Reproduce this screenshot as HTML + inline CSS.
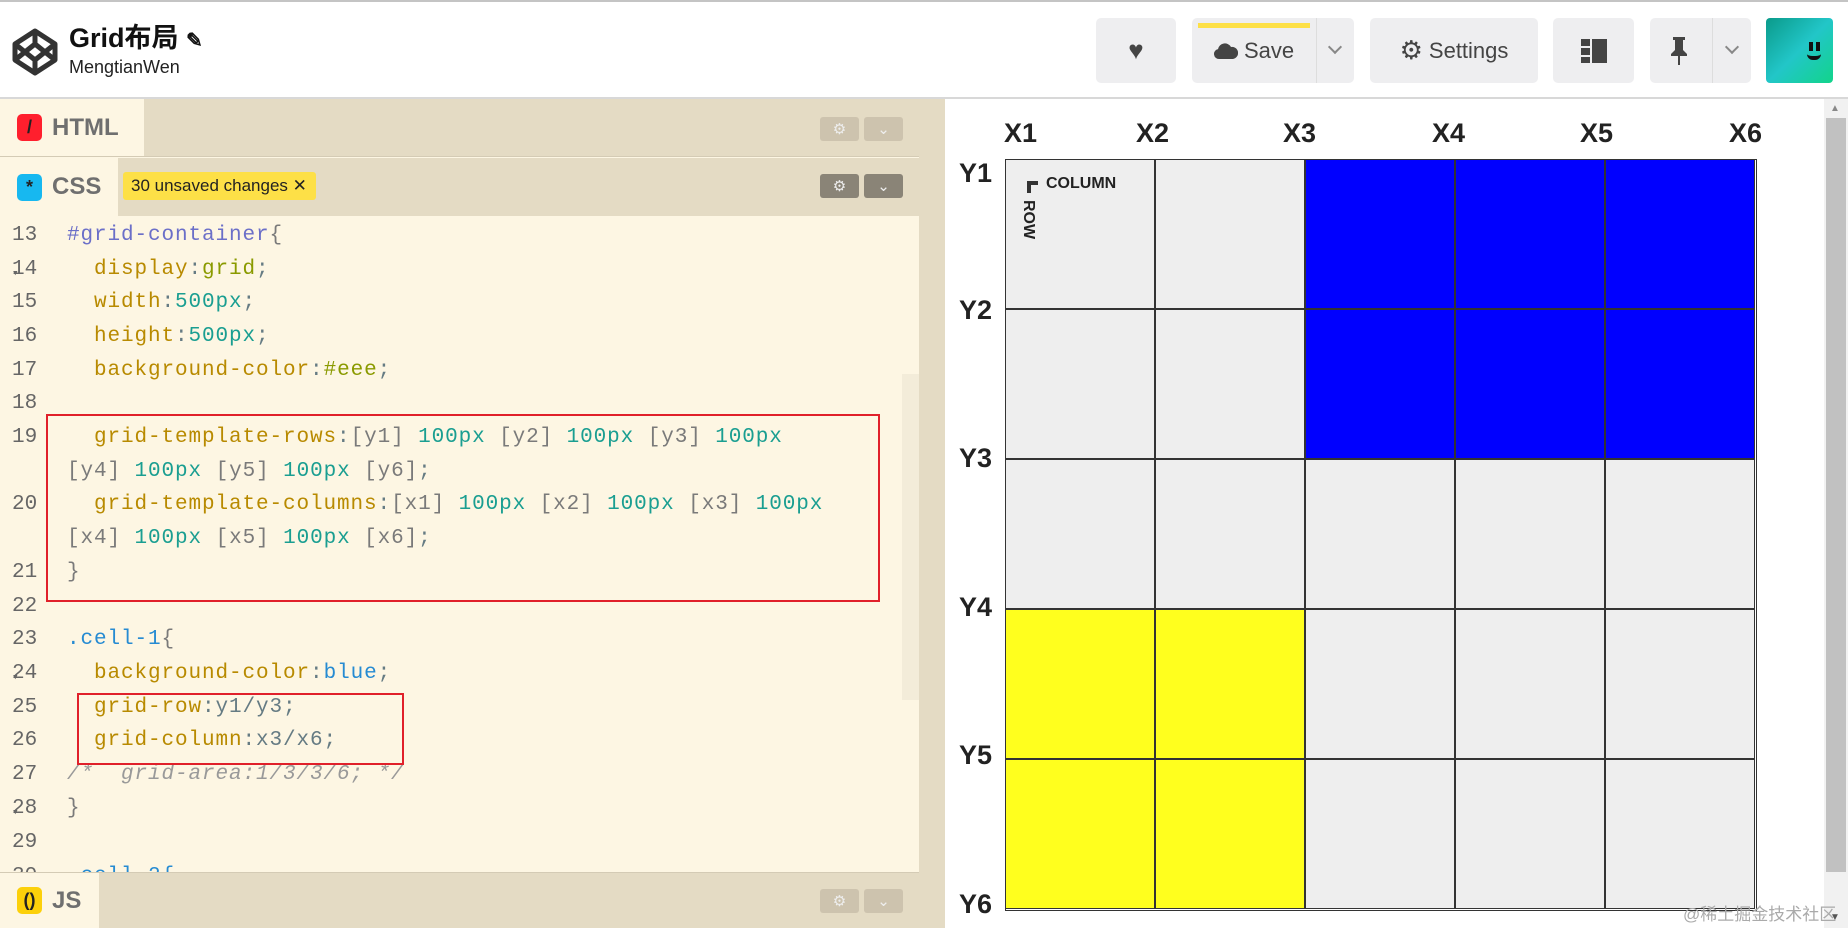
<!DOCTYPE html>
<html><head><meta charset="utf-8"><style>
*{margin:0;padding:0;box-sizing:border-box}
body{width:1848px;height:928px;overflow:hidden;background:#fff;font-family:"Liberation Sans","Noto Sans CJK SC",sans-serif;position:relative}
.a{position:absolute}
.hdr{left:0;top:0;width:1848px;height:99px;background:#fff;border-top:2px solid #c4c4c4;border-bottom:2px solid #d8d8d8}
.btn{position:absolute;top:16px;height:65px;background:#eeeef0;border-radius:5px;color:#444;font-size:22px;display:flex;align-items:center;justify-content:center}
.ed{left:0;top:99px;width:919px;height:829px;background:#fdf6e3}
.bar{position:absolute;left:0;width:919px;background:#e4dbc4}
.tab{position:absolute;left:0;top:0;bottom:0;background:#fdf6e3;display:flex;align-items:center;font-size:24px;color:#6f6f6f;font-weight:bold}
.ic{width:25px;height:27px;border-radius:5px;margin:0 10px 0 17px;display:flex;align-items:center;justify-content:center;font-size:18px;color:#222}
.sb{position:absolute;width:39px;height:24px;background:#cdc3ae;border-radius:3px;color:#eee;font-size:15px;display:flex;align-items:center;justify-content:center}
.ln{position:absolute;left:12px;width:36px;font-family:"Liberation Mono",monospace;font-size:21px;color:#666;height:34px;line-height:34px}
.cd{position:absolute;font-family:"Liberation Mono",monospace;font-size:21px;letter-spacing:0.9px;height:34px;line-height:34px;white-space:pre;color:#657b83}
.p{color:#b88a00}.n{color:#1a9e91}.g{color:#7a7a7a}.s{color:#6b6fc8}.b{color:#268bd2}.o{color:#8a9a00}.c{color:#999;font-style:italic}
.lab{position:absolute;font-weight:bold;font-size:27px;color:#222}
.cell{position:absolute;width:150px;height:150px;border:1.5px solid #333;background:#eee}
.chev{position:absolute;width:10px;height:10px;border-right:2px solid #888;border-bottom:2px solid #888;transform:rotate(45deg)}
</style></head><body>
<div class="a hdr">
<svg class="a" style="left:12px;top:26px" width="46" height="48" viewBox="0 0 46 48"><g fill="none" stroke="#333" stroke-width="5" stroke-linejoin="round"><path d="M23 3 L43 16 L43 32 L23 45 L3 32 L3 16 Z"/><path d="M23 3 V16 M23 32 V45 M3 16 L23 32 L43 16 M3 32 L23 16 L43 32"/></g></svg>
<div class="a" style="left:69px;top:14px;font-size:27px;font-weight:bold;color:#111">Grid布局 <span style="font-size:20px">✎</span></div>
<div class="a" style="left:69px;top:55px;font-size:18px;color:#222">MengtianWen</div>
<div class="btn" style="left:1096px;width:80px;font-size:26px">♥</div>
<div class="btn" style="left:1192px;width:162px;justify-content:flex-start"><div class="a" style="left:6px;top:5px;width:112px;height:5px;background:#fde047"></div><svg style="margin-left:22px" width="24" height="18" viewBox="0 0 24 18"><path d="M5 17a5 5 0 0 1-1-9.9A7 7 0 0 1 17 5a5 5 0 0 1 2 12z" fill="#444"/></svg><span style="margin-left:6px">Save</span><div class="a" style="left:124px;top:0;width:1px;height:65px;background:#ddd"></div><div class="chev" style="left:138px;top:24px"></div></div>
<div class="btn" style="left:1370px;width:168px"><span style="font-size:26px;margin-right:6px">⚙</span>Settings</div>
<div class="btn" style="left:1553px;width:81px"><svg width="26" height="26"><rect x="0" y="1" width="9" height="7" fill="#444"/><rect x="0" y="10" width="9" height="7" fill="#444"/><rect x="0" y="19" width="9" height="6" fill="#444"/><rect x="11" y="1" width="15" height="24" fill="#444"/></svg></div>
<div class="btn" style="left:1650px;width:101px;justify-content:flex-start"><svg style="margin-left:20px" width="18" height="30"><path d="M3 1h12v3h-2v10l4 4v2H1v-2l4-4V4H3z" fill="#444"/><rect x="8" y="20" width="2" height="9" fill="#444"/></svg><div class="a" style="left:62px;top:0;width:1px;height:65px;background:#ddd"></div><div class="chev" style="left:77px;top:24px"></div></div>
<div class="a" style="left:1766px;top:16px;width:67px;height:65px;border-radius:4px;background:linear-gradient(135deg,#0a9a8a,#22c6c8 50%,#12d48a)"><div class="a" style="left:43px;top:24px;width:4px;height:9px;background:#111"></div><div class="a" style="left:50px;top:24px;width:4px;height:9px;background:#111"></div><div class="a" style="left:41px;top:36px;width:14px;height:6px;border-bottom:4px solid #111;border-radius:0 0 8px 8px"></div></div>
</div>
<div class="a ed">
<div class="bar" style="top:0;height:58px;border-bottom:1px solid #d4cbb5"><div class="tab" style="width:144px"><div class="ic" style="background:#ff1f2d">/</div>HTML</div>
<div class="sb" style="left:820px;top:18px">⚙</div><div class="sb" style="left:864px;top:18px">⌄</div></div>
<div class="bar" style="top:59px;height:58px"><div class="tab" style="width:118px"><div class="ic" style="background:#17b8f0">*</div>CSS</div>
<div class="a" style="left:123px;top:14px;width:193px;height:28px;background:#fde047;border-radius:3px;font-size:17px;color:#222;line-height:28px;padding-left:8px">30 unsaved changes ✕</div>
<div class="sb" style="left:820px;top:16px;background:#8a8477">⚙</div><div class="sb" style="left:864px;top:16px;background:#8a8477">⌄</div></div>
<div class="a" style="left:902px;top:275px;width:17px;height:326px;background:#f3ecd9"></div>
</div>
<div class="ln" style="top:219px">13<span style="font-size:11px"> ▾</span></div><div class="cd s" style="left:67px;top:219px">#grid-container<span class="g">{</span></div>
<div class="ln" style="top:253px">14</div><div class="cd" style="left:94px;top:253px"><span class="p">display</span>:<span class="o">grid</span>;</div>
<div class="ln" style="top:286px">15</div><div class="cd" style="left:94px;top:286px"><span class="p">width</span>:<span class="n">500px</span>;</div>
<div class="ln" style="top:320px">16</div><div class="cd" style="left:94px;top:320px"><span class="p">height</span>:<span class="n">500px</span>;</div>
<div class="ln" style="top:354px">17</div><div class="cd" style="left:94px;top:354px"><span class="p">background-color</span>:<span class="o">#eee</span>;</div>
<div class="ln" style="top:387px">18</div>
<div class="ln" style="top:421px">19</div><div class="cd" style="left:94px;top:421px"><span class="p">grid-template-rows</span>:<span class="g">[y1]</span> <span class="n">100px</span> <span class="g">[y2]</span> <span class="n">100px</span> <span class="g">[y3]</span> <span class="n">100px</span></div>
<div class="cd" style="left:67px;top:455px"><span class="g">[y4]</span> <span class="n">100px</span> <span class="g">[y5]</span> <span class="n">100px</span> <span class="g">[y6]</span>;</div>
<div class="ln" style="top:488px">20</div><div class="cd" style="left:94px;top:488px"><span class="p">grid-template-columns</span>:<span class="g">[x1]</span> <span class="n">100px</span> <span class="g">[x2]</span> <span class="n">100px</span> <span class="g">[x3]</span> <span class="n">100px</span></div>
<div class="cd" style="left:67px;top:522px"><span class="g">[x4]</span> <span class="n">100px</span> <span class="g">[x5]</span> <span class="n">100px</span> <span class="g">[x6]</span>;</div>
<div class="ln" style="top:556px">21</div><div class="cd g" style="left:67px;top:556px">}</div>
<div class="ln" style="top:590px">22</div>
<div class="ln" style="top:623px">23<span style="font-size:11px"> ▾</span></div><div class="cd b" style="left:67px;top:623px">.cell-1<span class="g">{</span></div>
<div class="ln" style="top:657px">24</div><div class="cd" style="left:94px;top:657px"><span class="p">background-color</span>:<span class="b">blue</span>;</div>
<div class="ln" style="top:691px">25</div><div class="cd" style="left:94px;top:691px"><span class="p">grid-row</span>:y1/y3;</div>
<div class="ln" style="top:724px">26</div><div class="cd" style="left:94px;top:724px"><span class="p">grid-column</span>:x3/x6;</div>
<div class="ln" style="top:758px">27<span style="font-size:11px"> ▾</span></div><div class="cd c" style="left:67px;top:758px">/*  grid-area:1/3/3/6; */</div>
<div class="ln" style="top:792px">28</div><div class="cd g" style="left:67px;top:792px">}</div>
<div class="ln" style="top:826px">29</div>
<div class="ln" style="top:860px">30</div><div class="cd b" style="left:67px;top:860px">.cell-2{</div>
<div class="a" style="left:46px;top:414px;width:834px;height:188px;border:2.5px solid #e0202a"></div>
<div class="a" style="left:77px;top:693px;width:327px;height:72px;border:2.5px solid #e0202a"></div>
<div class="bar" style="top:872px;height:56px;border-top:1px solid #d4cbb5"><div class="tab" style="width:99px"><div class="ic" style="background:#fcd00a">()</div>JS</div>
<div class="sb" style="left:820px;top:16px">⚙</div><div class="sb" style="left:864px;top:16px">⌄</div></div>
<div class="a" style="left:919px;top:99px;width:26px;height:829px;background:#e4dbc4"></div>
<div class="lab" style="left:1004px;top:118px">X1</div><div class="lab" style="left:1136px;top:118px">X2</div><div class="lab" style="left:1283px;top:118px">X3</div><div class="lab" style="left:1432px;top:118px">X4</div><div class="lab" style="left:1580px;top:118px">X5</div><div class="lab" style="left:1729px;top:118px">X6</div>
<div class="lab" style="left:959px;top:158px">Y1</div><div class="lab" style="left:959px;top:295px">Y2</div><div class="lab" style="left:959px;top:443px">Y3</div><div class="lab" style="left:959px;top:592px">Y4</div><div class="lab" style="left:959px;top:740px">Y5</div><div class="lab" style="left:959px;top:889px">Y6</div>
<div id="g" class="a" style="left:1005px;top:159px;width:752px;height:752px;border:1.5px solid #333"></div>
<script>
var g=document.getElementById('g');
for(var r=0;r<5;r++)for(var c=0;c<5;c++){var d=document.createElement('div');d.className='cell';d.style.left=(c*150-1.5)+'px';d.style.top=(r*150-1.5)+'px';if(r<2&&c>=2)d.style.background='#0000ff';if(r>=3&&c<2)d.style.background='#ffff1e';g.appendChild(d);}
</script>
<div class="a" style="left:1027px;top:181px;width:4px;height:12px;background:#333"></div><div class="a" style="left:1027px;top:181px;width:11px;height:4px;background:#333"></div>
<div class="a" style="left:1046px;top:175px;font-size:16px;font-weight:bold;color:#222">COLUMN</div>
<div class="a" style="left:1019px;top:200px;font-size:16px;font-weight:bold;color:#222;writing-mode:vertical-rl">ROW</div>
<div class="a" style="left:1824px;top:99px;width:24px;height:829px;background:#f1f1f1"></div>
<div class="a" style="left:1826px;top:118px;width:20px;height:754px;background:#c1c1c1"></div>
<div class="a" style="left:1830px;top:103px;font-size:10px;color:#888">▲</div><div class="a" style="left:1830px;top:912px;font-size:10px;color:#555">▼</div>
<div class="a" style="left:1683px;top:900px;font-size:17px;color:#aaa">@稀土掘金技术社区</div>
</body></html>
